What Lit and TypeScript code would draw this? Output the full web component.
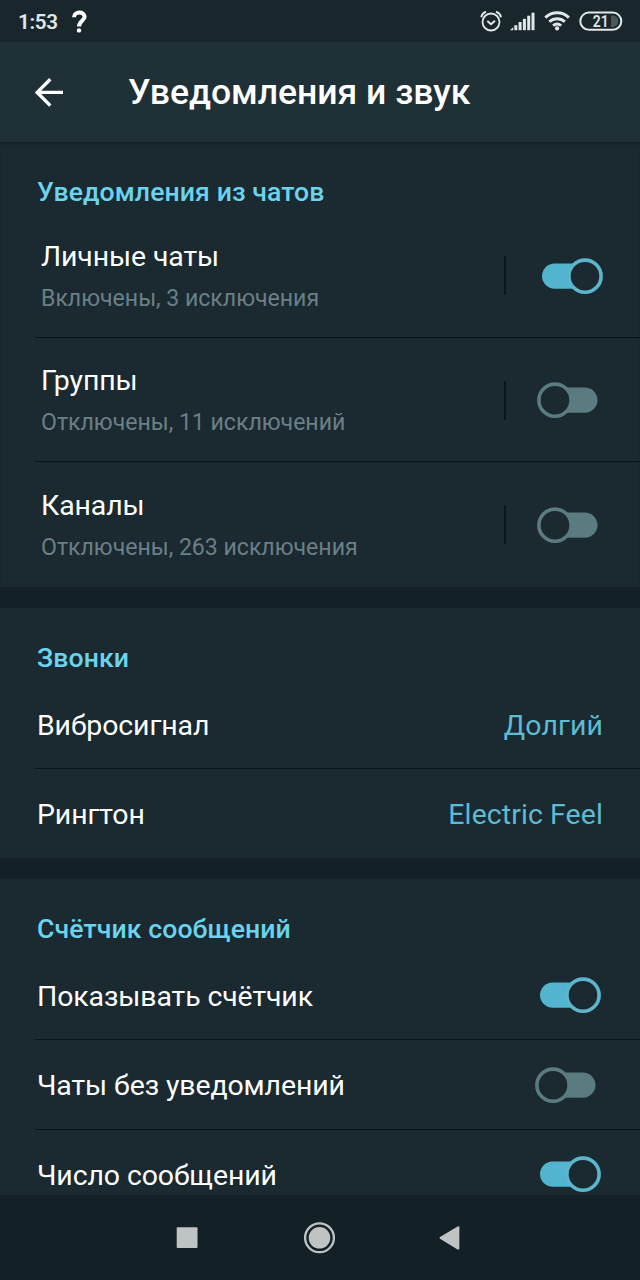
import { LitElement, html, css, svg, nothing } from "lit";
import { customElement, property } from "lit/decorators.js";

@customElement("toggle-switch")
class ToggleSwitch extends LitElement {
  @property({ type: Boolean }) on = false;

  static styles = css`
    :host { display: block; width: 70px; height: 38px; }
    svg { display: block; }
    .track-on { fill: #53b4cf; }
    .track-off { fill: #5a7b80; }
    .thumb { fill: #1a2a30; stroke-width: 3.6; }
    .thumb-on { stroke: #5cb5cd; }
    .thumb-off { stroke: #5a7b80; }
  `;

  render() {
    return html`<svg width="70" height="38" viewBox="0 0 70 38">
      ${this.on
        ? svg`<rect class="track-on" x="7" y="6.5" width="48" height="25.2" rx="12.6"/><circle class="thumb thumb-on" cx="50" cy="19.2" r="16.1"/>`
        : svg`<rect class="track-off" x="15" y="6.5" width="47.5" height="25.2" rx="12.6"/><circle class="thumb thumb-off" cx="20" cy="19.2" r="16.1"/>`}
    </svg>`;
  }
}

interface Row {
  title: string;
  detail?: string;
  value?: string;
  on?: boolean;
}

const sections: { heading: string; rows: Row[] }[] = [
  {
    heading: "Уведомления из чатов",
    rows: [
      { title: "Личные чаты", detail: "Включены, 3 исключения", on: true },
      { title: "Группы", detail: "Отключены, 11 исключений", on: false },
      { title: "Каналы", detail: "Отключены, 263 исключения", on: false },
    ],
  },
  {
    heading: "Звонки",
    rows: [
      { title: "Вибросигнал", value: "Долгий" },
      { title: "Рингтон", value: "Electric Feel" },
    ],
  },
  {
    heading: "Счётчик сообщений",
    rows: [
      { title: "Показывать счётчик", on: true },
      { title: "Чаты без уведомлений", on: false },
      { title: "Число сообщений", on: true },
    ],
  },
];

@customElement("app-root")
class AppRoot extends LitElement {
  static styles = css`
    :host {
      display: flex; flex-direction: column; width: 640px; height: 1280px; overflow: hidden;
      background: #132026; color: #fff; font-family: Roboto, sans-serif; font-size: 28.44px;
      white-space: nowrap;
    }
    * { box-sizing: border-box; }
    svg { display: block; flex: none; }
    .status { flex: none; height: 42px; background: #19272d; display: flex; align-items: center; padding-left: 18px; }
    .clock { font-size: 20.6px; font-weight: 600; color: #e2e7e9; line-height: 42px; width: 53px; padding-top: 1px; letter-spacing: -0.3px; }
    .status-icons { margin-left: auto; }
    .battery { font-size: 16px; font-weight: 600; fill: #e2e7e9; }
    .bar { flex: none; height: 100px; background: #1f3037; display: flex; align-items: center; padding-left: 33px; }
    .page-title { font-size: 35.56px; font-weight: 500; margin-left: 63px; line-height: 100px; letter-spacing: -0.03px; }
    .content { flex: 1; min-height: 0; overflow: hidden; display: flex; flex-direction: column; gap: 21px; }
    .section { flex: none; background: #1a2a30; }
    .section:first-child { box-shadow: inset 0 4px 4px -2px #15232a; }
    .heading { height: 71.4px; padding: 15px 0 0 37px; line-height: 71px; font-size: 26.67px; font-weight: 500; color: #6cd3ee; letter-spacing: 0.07px; }
    .row { position: relative; height: 89.5px; padding: 0 37px; display: flex; align-items: center; justify-content: space-between; }
    .row.tall { height: 124.5px; padding: 0 35px 0 41px; }
    .row:not(:last-child)::after { content: ""; position: absolute; left: 35px; right: 0; bottom: 0; height: 1px; background: #0b161b; }
    .label { line-height: 36px; padding-top: 3px; letter-spacing: -0.1px; }
    .detail { font-size: 23.11px; line-height: 30px; color: #6b7f86; padding-top: 9px; letter-spacing: -0.02px; }
    .tall .label { padding-top: 1px; }
    .value { color: #5fbad4; padding-top: 2px; letter-spacing: 0.1px; }
    .control { display: flex; align-items: center; }
    .split { width: 2px; height: 39px; background: #0b161b; margin-right: 29px; }
    .nav { flex: none; height: 85px; background: #132026; display: flex; justify-content: center; }
  `;

  private row(r: Row) {
    return html`<div class="row ${r.detail ? "tall" : ""}">
      <div>
        <div class="label">${r.title}</div>
        ${r.detail ? html`<div class="detail">${r.detail}</div>` : nothing}
      </div>
      ${r.value
        ? html`<div class="value">${r.value}</div>`
        : html`<div class="control">
            ${r.detail ? html`<div class="split"></div>` : nothing}
            <toggle-switch ?on=${r.on}></toggle-switch>
          </div>`}
    </div>`;
  }

  render() {
    return html`
      <div class="status">
        <span class="clock">1:53</span>
        <svg width="18" height="24" viewBox="0 0 18 24" fill="none" stroke="#fff" stroke-width="4">
          <path d="M3 8.2C3 2 13.6 2 13.6 7.8C13.6 11.8 8 12 8 17.6"/>
          <circle cx="8" cy="21.4" r="2.2" fill="#fff" stroke="none"/>
        </svg>
        <svg class="status-icons" width="170" height="42" viewBox="470 0 170 42" fill="none" stroke="#e2e7e9">
          <circle cx="491" cy="22" r="8.5" stroke-width="1.8"/>
          <path d="M487.3 21l3.7 3.2 4-3.5" stroke-width="2"/>
          <path d="M481.3 17.2C481.8 14.5 483.5 12.6 486 11.8M496 11.8C498.5 12.6 500.4 14.5 501 17.2" stroke-width="2"/>
          <g fill="#e2e7e9" stroke="none">
            <path d="M510 30.2l3.2-3v3z"/><rect x="514.3" y="25.2" width="3" height="5"/>
            <rect x="518.6" y="22" width="3" height="8.2"/><rect x="522.9" y="18.8" width="3" height="11.4"/>
            <rect x="527.2" y="15.7" width="3" height="14.5"/><rect x="531.5" y="12.7" width="3" height="17.5"/>
          </g>
          <path d="M545.3 17.6C552 11.2 562.2 11.2 568.9 17.6M549.3 21.8C553.8 17.7 560.4 17.7 564.9 21.8M553.1 25.7C555.5 23.6 558.7 23.6 561.1 25.7" stroke-width="2.9"/>
          <circle cx="557.1" cy="28.4" r="2.1" fill="#e2e7e9" stroke="none"/>
          <path d="M611 15.4h1.5a5.8 5.8 0 0 1 0 11.6h-1.5z" fill="#4b585d" stroke="none"/>
          <rect x="580.3" y="12.6" width="41" height="17.2" rx="8.6" stroke-width="2"/>
          <text class="battery" x="592.8" y="26.9" stroke="none" textLength="15.8" lengthAdjust="spacingAndGlyphs">21</text>
        </svg>
      </div>
      <div class="bar">
        <svg width="32" height="32" viewBox="0 0 32 32" fill="none" stroke="#fff" stroke-width="3.4">
          <path d="M30 16.4H4M17.3 3.2L4.2 16.4l13.1 13.2"/>
        </svg>
        <div class="page-title">Уведомления и звук</div>
      </div>
      <div class="content">
        ${sections.map((s) => html`<div class="section">
          <div class="heading">${s.heading}</div>
          ${s.rows.map((r) => this.row(r))}
        </div>`)}
      </div>
      <div class="nav">
        <svg width="340" height="85" viewBox="150 1195 340 85" fill="#bfc3c4">
          <rect x="176.7" y="1227.2" width="20.8" height="20.8" rx="1"/>
          <circle cx="319.5" cy="1237.8" r="10.8"/>
          <circle cx="319.5" cy="1237.8" r="14.4" fill="none" stroke="#bfc3c4" stroke-width="2.3"/>
          <path d="M440 1237a1.2 1.2 0 0 0 0 1.8l17.6 10.6q1.8.6 1.8-1v-21q0-1.6-1.8-1z"/>
        </svg>
      </div>
    `;
  }
}
